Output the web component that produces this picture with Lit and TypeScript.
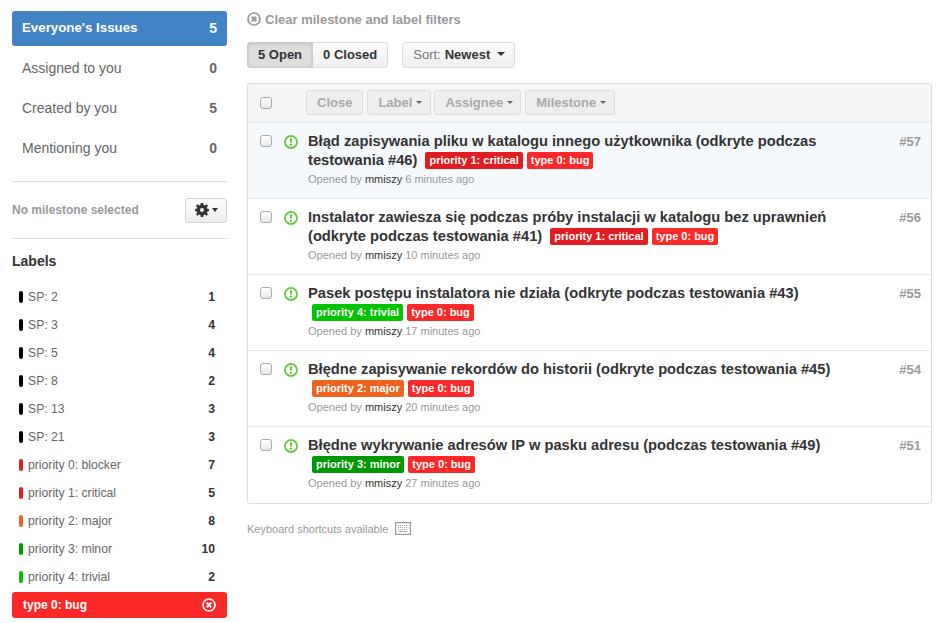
import { LitElement, html, css, svg } from "lit";
import { customElement } from "lit/decorators.js";

const C: Record<string, string> = {
  crit: "#e11d21", bug: "#fc2929", trivial: "#02c402", major: "#eb6420", minor: "#009800",
};
const nav = [["Everyone's Issues", 5], ["Assigned to you", 0], ["Created by you", 5], ["Mentioning you", 0]];
const labels: [string, string, number][] = [
  ["SP: 2", "#000", 1], ["SP: 3", "#000", 4], ["SP: 5", "#000", 4], ["SP: 8", "#000", 2], ["SP: 13", "#000", 3], ["SP: 21", "#000", 3],
  ["priority 0: blocker", C.crit, 7], ["priority 1: critical", C.crit, 5], ["priority 2: major", C.major, 8],
  ["priority 3: minor", C.minor, 10], ["priority 4: trivial", C.trivial, 2],
];
const T: Record<string, [string, string]> = {
  c: ["priority 1: critical", C.crit], b: ["type 0: bug", C.bug], t: ["priority 4: trivial", C.trivial],
  m: ["priority 2: major", C.major], n: ["priority 3: minor", C.minor],
};
const issues: [string, string[], string, string, boolean][] = [
  ["Błąd zapisywania pliku w katalogu innego użytkownika (odkryte podczas testowania #46)", ["c", "b"], "6 minutes ago", "#57", false],
  ["Instalator zawiesza się podczas próby instalacji w katalogu bez uprawnień (odkryte podczas testowania #41)", ["c", "b"], "10 minutes ago", "#56", false],
  ["Pasek postępu instalatora nie działa (odkryte podczas testowania #43)", ["t", "b"], "17 minutes ago", "#55", true],
  ["Błędne zapisywanie rekordów do historii (odkryte podczas testowania #45)", ["m", "b"], "20 minutes ago", "#54", true],
  ["Błędne wykrywanie adresów IP w pasku adresu (podczas testowania #49)", ["n", "b"], "27 minutes ago", "#51", true],
];
const xCircle = (c: string) => svg`<svg width="14" height="14" viewBox="0 0 14 14"><circle cx="7" cy="7" r="6" fill="none" stroke="${c}" stroke-width="1.7"/><path d="M4.8 4.8l4.4 4.4M9.2 4.8l-4.4 4.4" stroke="${c}" stroke-width="2"/></svg>`;

@customElement("app-root")
export class AppRoot extends LitElement {
  static styles = css`
    :host { display: block; width: 946px; height: 623px; overflow: hidden; background: #fff; font-family: "Liberation Sans", Arial, sans-serif; color: #333; }
    * { box-sizing: border-box; }
    .page { display: grid; grid-template-columns: 215px 685px; column-gap: 20px; padding: 11px 14px 0 12px; }
    .nav { display: flex; flex-direction: column; gap: 5px; }
    .nav a { display: flex; justify-content: space-between; align-items: center; height: 35px; padding: 0 10px 2px; font-size: 14px; color: #666; border-radius: 3px; }
    .nav a b { color: #666; }
    .nav a.on { background: #4183c4; color: #fff; font-weight: bold; font-size: 13.3px; }
    .nav a.on b { color: #fff; font-size: 14px; }
    .mile { display: flex; justify-content: space-between; align-items: center; margin-top: 15px; height: 58px; border-top: 1px solid #ddd; border-bottom: 1px solid #ddd; }
    .mile span { font-size: 12px; font-weight: bold; color: #999; }
    .gear { display: flex; align-items: center; justify-content: center; gap: 3px; width: 42px; height: 25px; border: 1px solid #d5d5d5; border-radius: 3px; background: linear-gradient(#fcfcfc, #eee); }
    h3 { margin: 14px 0 0; font-size: 14px; line-height: 17px; color: #333; }
    .labels { display: flex; flex-direction: column; margin-top: 13px; }
    .lab { display: flex; align-items: center; height: 28px; padding: 0 12px 0 7px; font-size: 12.2px; color: #666; }
    .lab i { width: 4px; height: 12px; border-radius: 2px; margin-right: 5px; }
    .lab b { margin-left: auto; color: #333; }
    .sel { display: flex; justify-content: space-between; align-items: center; height: 26px; padding: 0 11px; margin-top: 1px; background: #fc2929; color: #fff; font-size: 12px; font-weight: bold; border-radius: 3px; }
    .clear { display: flex; align-items: center; gap: 4px; height: 16px; font-size: 13px; font-weight: bold; color: #999; }
    .tools { display: flex; margin-top: 15px; }
    .seg { display: flex; height: 26px; font-size: 13px; font-weight: bold; color: #333; }
    .seg span { display: flex; align-items: center; padding: 0 10px 2px; border: 1px solid #ddd; background: linear-gradient(#fcfcfc, #eee); }
    .seg .a { background: #ddd; border-color: #ccc; border-radius: 3px 0 0 3px; box-shadow: inset 0 1px 3px rgba(0,0,0,.15); }
    .seg .z { border-left: 0; border-radius: 0 3px 3px 0; }
    .sort { display: flex; align-items: center; gap: 4px; height: 26px; margin-left: 14px; padding: 0 9px 2px 10px; font-size: 13px; color: #777; border: 1px solid #ddd; border-radius: 3px; background: linear-gradient(#fcfcfc, #eee); }
    .sort b { color: #333; }
    .caret { display: inline-block; width: 0; height: 0; border: 4px solid transparent; border-top-color: #333; border-bottom: 0; }
    .caret.s { border-width: 3px; border-bottom: 0; }
    .caret.sort-c { margin-left: 3px; }
    .box { margin-top: 15px; border: 1px solid #ddd; border-radius: 3px; }
    .head { display: flex; align-items: center; height: 39px; padding: 0 0 1px 12px; background: #f5f5f5; border-bottom: 1px solid #e5e5e5; }
    .cb { width: 12px; height: 12px; flex: none; border: 1px solid #aaa; border-radius: 3px; background: linear-gradient(#fff, #e8e8e8); }
    .acts { display: flex; gap: 3px; margin-left: 34px; }
    .acts span { display: flex; align-items: center; gap: 4px; height: 25px; padding: 0 8px 1px 10px; font-size: 13px; font-weight: bold; color: #aaa; border: 1px solid #ddd; border-radius: 3px; background: #eee; }
    .acts span:first-child { padding: 0 10px 1px; margin-right: 1px; }
    .acts span:nth-child(3) { padding-right: 7px; margin-right: 1px; }
    .acts .caret { border-top-color: #666; }
    .row { display: grid; grid-template-columns: 12px 26px 1fr auto; height: 76px; padding: 9px 10px 0 12px; border-bottom: 1px solid #e5e5e5; }
    .row:last-child { border-bottom: 0; }
    .row.first { background: #f5f9fc; }
    .row .cb { margin-top: 3px; }
    .row svg.st { margin: 3px 0 0 12px; }
    .body { margin-left: 10px; width: 530px; }
    .t { font-size: 14.7px; line-height: 19px; font-weight: bold; color: #333; }
    .tag { display: inline-block; height: 17px; margin-left: 4px; padding: 0 4px; line-height: 17px; font-size: 11px; font-weight: bold; color: #fff; border-radius: 2px; vertical-align: 1px; }
    .by { font-size: 11px; line-height: 14px; margin-top: 2px; color: #999; }
    .by a { color: #333; }
    .num { font-size: 13px; font-weight: bold; color: #999; margin-top: 2px; }
    .kbd { display: flex; align-items: center; gap: 7px; margin-top: 18px; font-size: 11px; color: #999; }
  `;
  render() {
    return html`<div class="page">
      <aside>
        <div class="nav">${nav.map((n, i) => html`<a class=${i === 0 ? "on" : ""}>${n[0]}<b>${n[1]}</b></a>`)}</div>
        <div class="mile"><span>No milestone selected</span>
          <div class="gear"><svg width="14" height="14" viewBox="0 0 14 14"><path fill="#333" fill-rule="evenodd" d="M5.8 0h2.4l.4 2 1.2.5L11.5 1.3 13 2.8 11.8 4.5l.5 1.2L14 6v2.1l-1.7.3-.5 1.2 1.2 1.7-1.5 1.5-1.7-1.2-1.2.5-.4 1.9H5.8l-.4-1.9-1.2-.5-1.7 1.2L1 11.3l1.2-1.7-.5-1.2L0 8.1V6l1.7-.3.5-1.2L1 2.8l1.5-1.5 1.7 1.2 1.2-.5zM7 5a2 2 0 1 0 0 4 2 2 0 0 0 0-4z"/></svg><span class="caret s" style="border-width:4px 3.5px 0"></span></div>
        </div>
        <h3>Labels</h3>
        <div class="labels">${labels.map((l) => html`<div class="lab"><i style="background:${l[1]}"></i>${l[0]}<b>${l[2]}</b></div>`)}</div>
        <div class="sel">type 0: bug ${xCircle("#fff")}</div>
      </aside>
      <main>
        <div class="clear">${xCircle("#999")} Clear milestone and label filters</div>
        <div class="tools">
          <div class="seg"><span class="a">5 Open</span><span class="z">0 Closed</span></div>
          <div class="sort">Sort: <b>Newest</b><i class="caret sort-c"></i></div>
        </div>
        <div class="box">
          <div class="head"><div class="cb"></div>
            <div class="acts"><span>Close</span><span>Label<i class="caret s"></i></span><span>Assignee<i class="caret s"></i></span><span>Milestone<i class="caret s"></i></span></div>
          </div>
          ${issues.map((r, i) => html`<div class="row ${i === 0 ? "first" : ""}">
            <div class="cb"></div>
            <svg class="st" width="14" height="14" viewBox="0 0 14 14"><circle cx="7" cy="7" r="6" fill="none" stroke="#6cc644" stroke-width="1.8"/><path d="M7 3.2v4.4M7 8.8v2" stroke="#6cc644" stroke-width="2"/></svg>
            <div class="body"><div class="t">${r[0]}${r[4] ? html`<br />` : " "}${r[1].map((k) => html`<span class="tag" style="background:${T[k][1]}">${T[k][0]}</span>`)}</div>
              <div class="by">Opened by <a>mmiszy</a> ${r[2]}</div></div>
            <div class="num">${r[3]}</div>
          </div>`)}
        </div>
        <div class="kbd">Keyboard shortcuts available <svg width="16" height="13" viewBox="0 0 16 13"><rect x=".6" y=".6" width="14.8" height="11.8" fill="none" stroke="#999" stroke-width="1.2"/><path d="M3 3.5h10M3 5.5h10M3 7.5h10" stroke="#aaa" stroke-dasharray="1 1"/><path d="M4 9.5h8" stroke="#aaa"/></svg></div>
      </main>
    </div>`;
  }
}
